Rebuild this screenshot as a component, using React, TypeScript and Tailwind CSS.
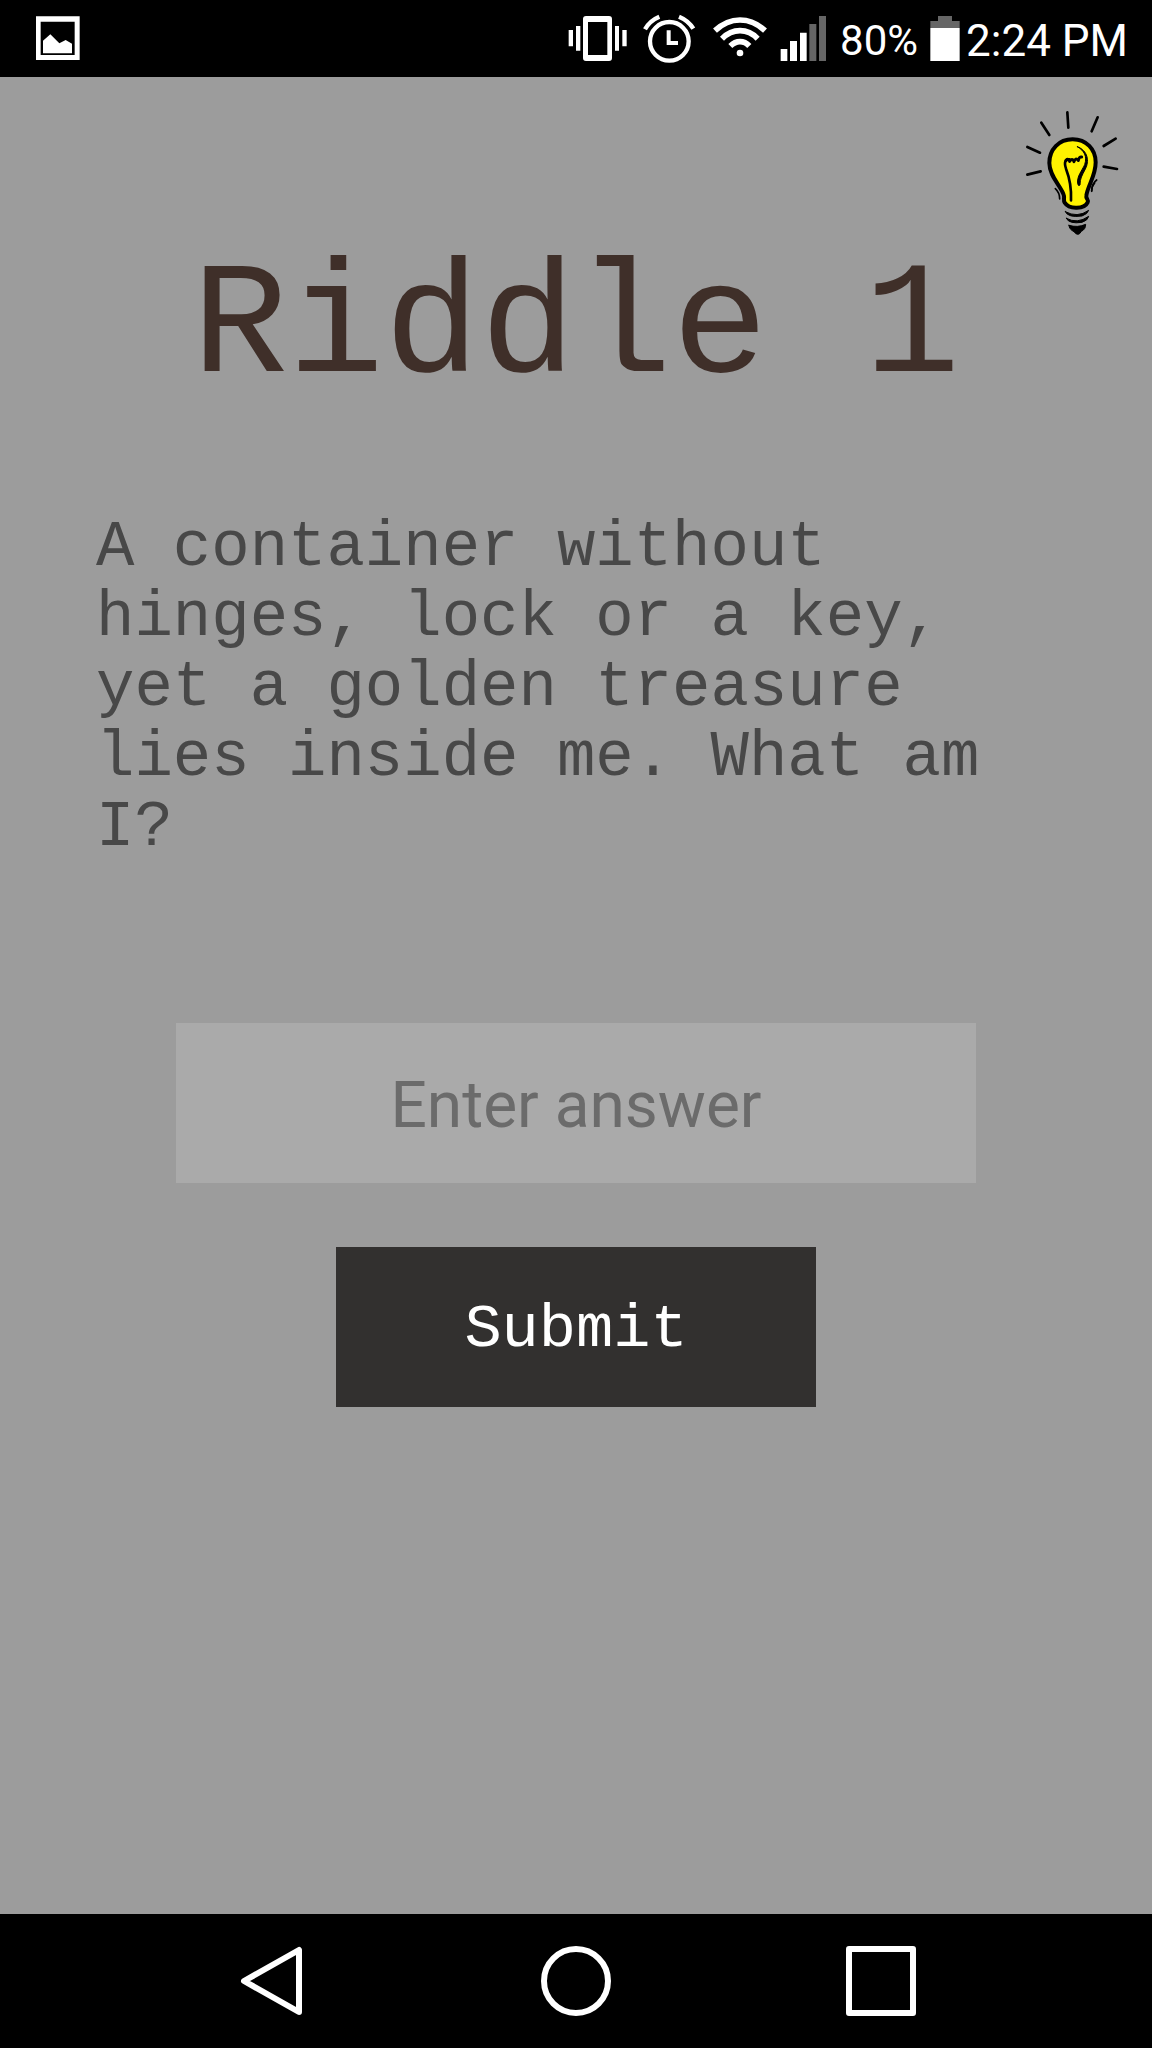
import { useState } from "react";

function PictureIcon() {
  return (
    <svg viewBox="108 0 132 231" className="h-[77px] w-11" aria-hidden="true">
      <path fill="#fff" fillRule="evenodd" d="M108 49H239V180H108ZM122 65V165H224V65Z" />
      <path fill="#fff" d="M129 160V122L151 103L178 130L197 120L216 131V160Z" />
    </svg>
  );
}

function VibrateIcon() {
  return (
    <svg viewBox="30 0 192 231" className="h-[77px] w-16" aria-hidden="true">
      <path fill="#fff" fillRule="evenodd" d="M90 48H159Q168 48 168 57V174Q168 183 159 183H90Q81 183 81 174V57Q81 48 90 48ZM96 66V165H154V66Z" />
      <path fill="#fff" d="M38 90H51V139H38ZM60 78H73V152H60ZM177 78H189V152H177ZM199 90H212V139H199Z" />
    </svg>
  );
}

function AlarmIcon() {
  return (
    <svg viewBox="255 0 162 231" className="h-[77px] w-[54px]" fill="none" stroke="#fff" aria-hidden="true">
      <circle cx="337" cy="124" r="58" strokeWidth="13" />
      <path strokeWidth="12" d="M335 91V129H363" />
      <path strokeWidth="13" d="M264 88Q278 62 307 50M366 50Q395 62 409 86" />
    </svg>
  );
}

function WifiIcon() {
  return (
    <svg viewBox="453 0 177 231" className="h-[77px] w-[59px]" fill="none" stroke="#fff" aria-hidden="true">
      <circle cx="549" cy="159" r="10" fill="#fff" stroke="none" />
      <path strokeWidth="17" d="M474 92Q508 60 549 60T624 92" />
      <path strokeWidth="17" d="M495 116Q519 92 549 92T602 116" />
      <path strokeWidth="17" d="M520 138Q533 125 549 125T577 138" />
    </svg>
  );
}

function SignalIcon() {
  return (
    <svg viewBox="657 0 147 231" className="h-[77px] w-[49px]" aria-hidden="true">
      <path fill="#fff" d="M662 147H682V183H662ZM690 123H711V183H690ZM720 98H740V183H720Z" />
      <path fill="#666" d="M748 72H769V183H748ZM777 48H798V183H777Z" />
    </svg>
  );
}

function BatteryIcon() {
  return (
    <svg viewBox="237 0 90 231" className="h-[77px] w-[30px]" aria-hidden="true">
      <path fill="#666" d="M261 48H303V63H326V84H238V63H261Z" />
      <path fill="#fff" d="M238 84H326V183H238Z" />
    </svg>
  );
}

function BulbIcon() {
  return (
    <svg viewBox="60 45 312 408" className="h-[136px] w-[104px]" fill="none" stroke="#000" strokeLinecap="round" strokeLinejoin="round" aria-hidden="true">
      <path strokeWidth="8" d="M202 67L205 113M124 98L148 135M82 171L120 188M82 254L122 244M293 82L275 124M347 146L311 168M311 230L351 237" />
      <path fill="#fff200" strokeWidth="12" d="M218 148C176 148 148 179 148 219C148 262 187 291 192 318C193 327 190 332 194 338C208 360 254 357 263 337C267 329 257 326 259 317C264 284 287 259 287 217C287 178 259 148 218 148Z" />
      <path strokeWidth="8" d="M213 331C215 288 208 262 198 236C191 215 197 208 208 208" />
      <path strokeWidth="9" d="M198 211Q205 204 209 214Q217 203 222 215Q226 202 235 211Q238 199 245 201" />
      <path fill="#000" strokeWidth="3" d="M232 170C265 182 268 215 256 237C246 257 240 265 240 285Q235 290 233 281C230 259 246 242 254 224C262 199 253 182 232 170Z" />
      <path strokeWidth="5" d="M166 296Q179 308 179 327M290 270Q275 281 275 304" />
      <path strokeWidth="5" d="M284 279Q275 289 275 302" />
      <path fill="#000" strokeWidth="3" d="M196 365Q232 385 266 361Q263 372 246 378Q204 384 196 365ZM199 385Q232 403 266 379Q264 391 246 397Q207 403 199 385Z" />
      <path fill="#000" strokeWidth="3" d="M207 406Q233 414 257 403Q257 418 244 424Q239 433 234 433Q227 433 222 425Q207 418 207 406Z" />
    </svg>
  );
}

export default function App() {
  const [answer, setAnswer] = useState("");

  return (
    <div className="flex min-h-screen flex-col bg-[#9c9c9c]">
      <header className="flex h-[77px] items-center justify-between bg-black pr-6 pl-9 font-['Roboto',sans-serif] text-white">
        <PictureIcon />
        <div className="flex items-center">
          <div className="mr-3 flex items-center gap-3">
            <VibrateIcon />
            <AlarmIcon />
            <WifiIcon />
            <SignalIcon />
            <span className="pt-1 text-[42px] leading-none">80%</span>
          </div>
          <div className="flex items-center gap-1.5">
            <BatteryIcon />
            <time className="pt-1 text-[44px] leading-none whitespace-nowrap">2:24 PM</time>
          </div>
        </div>
      </header>

      <main className="flex flex-1 flex-col">
        <div className="flex justify-end px-7 pt-7">
          <button type="button" aria-label="Show hint">
            <BulbIcon />
          </button>
        </div>
        <h1 className="mt-2 text-center font-['Liberation_Mono',monospace] text-[160px] leading-[160px] text-[#3f2f29]">
          Riddle 1
        </h1>
        <p className="mt-26 px-24 font-['Liberation_Mono',monospace] text-[64px] leading-[70px] text-[#484848]">
          A container without hinges, lock or a key, yet a golden treasure lies inside me. What am I?
        </p>
        <form className="mt-40 flex flex-col items-center gap-16 px-44" onSubmit={(e) => e.preventDefault()}>
          <input
            type="text"
            aria-label="Answer"
            placeholder="Enter answer"
            value={answer}
            onChange={(e) => setAnswer(e.target.value)}
            className="h-40 w-full bg-[#aaaaaa] pt-1 text-center font-['Roboto',sans-serif] text-[64px] text-[#333] outline-none placeholder:text-[#6b6b6b]"
          />
          <button type="submit" className="h-40 w-3/5 bg-[#32302f] pt-1 font-['Liberation_Mono',monospace] text-[62px] text-white">
            Submit
          </button>
        </form>
      </main>

      <nav className="flex h-[134px] items-center justify-center gap-[235px] bg-black">
        <button type="button" aria-label="Back">
          <svg viewBox="0 0 70 70" className="size-[70px]" fill="none" stroke="#fff" strokeWidth="6" strokeLinejoin="round">
            <path d="M63 4V66L8 35Z" />
          </svg>
        </button>
        <button type="button" aria-label="Home">
          <svg viewBox="0 0 70 70" className="size-[70px]" fill="none" stroke="#fff" strokeWidth="6">
            <circle cx="35" cy="35" r="32" />
          </svg>
        </button>
        <button type="button" aria-label="Recent apps">
          <svg viewBox="0 0 70 70" className="size-[70px]" fill="none" stroke="#fff" strokeWidth="6" strokeLinejoin="round">
            <rect x="3" y="3" width="64" height="64" />
          </svg>
        </button>
      </nav>
    </div>
  );
}
